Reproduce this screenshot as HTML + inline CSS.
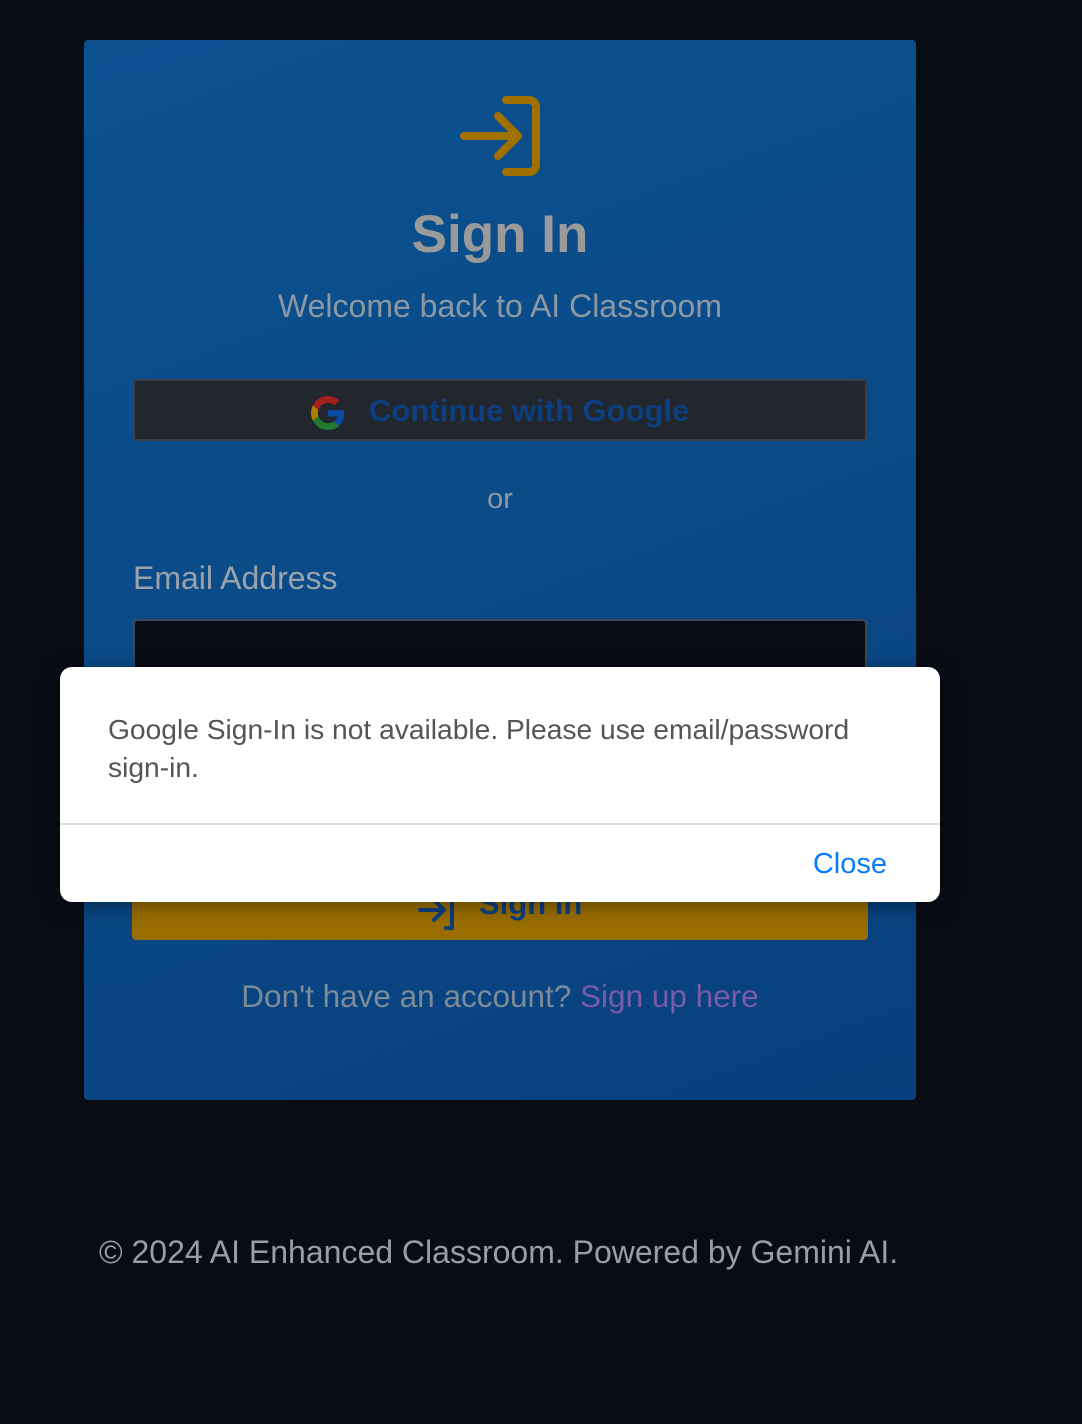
<!DOCTYPE html>
<html><head><meta charset="utf-8"><style>
*{margin:0;padding:0;box-sizing:border-box}
body{width:1082px;height:1424px;background:#080c15;font-family:"Liberation Sans",sans-serif;position:relative;overflow:hidden}
.a{position:absolute}
.card{left:84px;top:40px;width:832px;height:1060px;border-radius:4px;background:linear-gradient(160deg,#0b5190 0%,#0a4a87 50%,#083f7e 100%)}
.c{text-align:center;left:84px;width:832px}
</style></head><body>
<div class="a card"></div>
<svg class="a" style="left:456px;top:92px" width="90" height="90" viewBox="0 0 90 90">
<g fill="none" stroke="#a07000" stroke-width="8" stroke-linecap="round" stroke-linejoin="round">
<path d="M50 8h22q8 0 8 8v56q0 8-8 8H50"/><path d="M8 44h54M42 24l20 20-20 20"/></g></svg>
<div class="a c" style="top:204px;font-size:53px;font-weight:bold;color:#9a9a9a">Sign In</div>
<div class="a c" style="top:288px;font-size:32px;color:#8e98a2">Welcome back to AI Classroom</div>
<div class="a" style="left:133px;top:379px;width:734px;height:62px;background:#22262d;border:2px solid #3b4048;border-radius:4px"></div>
<svg class="a" style="left:311px;top:396px" width="34" height="34" viewBox="0 0 48 48">
<path fill="#a6201b" d="M24 9.5c3.5 0 6.6 1.2 9.1 3.6l6.8-6.8C35.8 2.4 30.3 0 24 0 14.6 0 6.6 5.4 2.7 13.2l7.9 6.2C12.5 13.7 17.8 9.5 24 9.5z"/>
<path fill="#0d47a1" d="M46.9 24.5c0-1.6-.1-3.1-.4-4.5H24v9h12.9c-.6 3-2.3 5.5-4.8 7.2l7.7 6c4.5-4.2 7.1-10.3 7.1-17.7z"/>
<path fill="#b07d00" d="M10.5 28.6c-.5-1.4-.8-3-.8-4.6s.3-3.2.8-4.6l-7.9-6.2C1 16.5 0 20.1 0 24s1 7.5 2.7 10.8l7.8-6.2z"/>
<path fill="#237a2e" d="M24 48c6.5 0 11.9-2.1 15.9-5.8l-7.7-6c-2.2 1.5-5 2.3-8.2 2.3-6.2 0-11.5-4.2-13.4-9.9l-7.9 6.2C6.6 42.6 14.6 48 24 48z"/></svg>
<div class="a" style="left:369px;top:393px;font-size:31px;font-weight:bold;color:#0b3f80">Continue with Google</div>
<div class="a c" style="top:483px;font-size:29px;color:#8e98a2">or</div>
<div class="a" style="left:133px;top:560px;font-size:32px;color:#9aa3ac">Email Address</div>
<div class="a" style="left:133px;top:619px;width:734px;height:70px;background:#080c15;border:2px solid #3d4656;border-radius:5px"></div>
<div class="a" style="left:132px;top:880px;width:736px;height:60px;background:#9a6d00;border-radius:4px"></div>
<svg class="a" style="left:416px;top:888px" width="44" height="44" viewBox="0 0 44 44"><g fill="none" stroke="#0b3f80" stroke-width="4" stroke-linecap="round" stroke-linejoin="round"><path d="M30 4h6v36h-6"/><path d="M4 22h24M18 12l10 10-10 10"/></g></svg>
<div class="a" style="left:479px;top:886px;font-size:31px;font-weight:bold;color:#0b3f80">Sign In</div>
<div class="a c" style="top:978px;font-size:31.5px;color:#7d8a97">Don't have an account? <span style="color:#7a5ba8">Sign up here</span></div>
<div class="a" style="left:99px;top:1234px;font-size:32px;color:#9a9ea4">© 2024 AI Enhanced Classroom. Powered by Gemini AI.</div>
<div class="a" style="left:60px;top:667px;width:880px;height:235px;background:#fff;border-radius:12px;box-shadow:0 4px 20px rgba(0,0,0,.4)">
<div class="a" style="left:48px;top:43px;width:780px;font-size:28.2px;line-height:38px;color:#555">Google Sign-In is not available. Please use email/password sign-in.</div>
<div class="a" style="left:0;top:156px;width:880px;height:2px;background:#dcdcdc"></div>
<div class="a" style="right:53px;top:181px;font-size:29px;color:#0a7bff">Close</div>
</div>
</body></html>
